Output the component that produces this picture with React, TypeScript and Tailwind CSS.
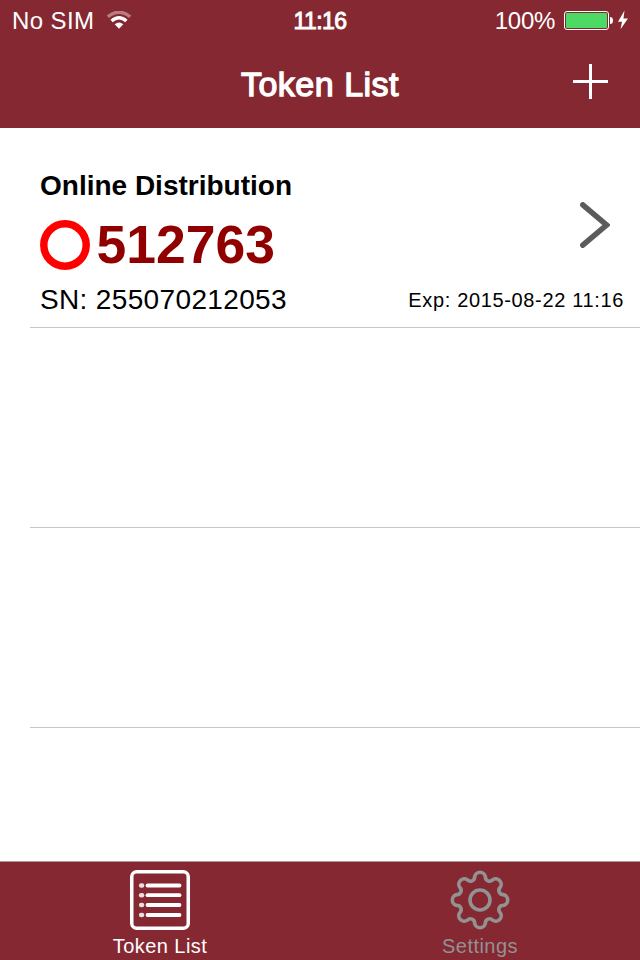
const toothAngles = [0, 45, 90, 135, 180, 225, 270, 315]

const polar = (r: number, deg: number) => {
    const a = (deg * Math.PI) / 180
    return `${(30 + r * Math.sin(a)).toFixed(2)} ${(30 - r * Math.cos(a)).toFixed(2)}`
}

// every tooth is one outward arc followed by a small inward one
const gearPath =
    `M${polar(23.8, -13)} ` +
    toothAngles.map(a => `A5.4 5.2 ${a} 0 1 ${polar(23.8, a + 13)} A4.2 4.2 0 0 0 ${polar(23.8, a + 32)}`).join(" ") +
    "Z"

const GearIcon = () => (
    <svg width="60" height="60" viewBox="0 0 60 60" fill="none" stroke="#929292" strokeWidth="3.6">
        <path d={gearPath} />
        <circle cx="30" cy="30" r="10" />
    </svg>
)

const ListIcon = () => (
    <svg width="60" height="60" viewBox="0 0 60 60" fill="none" stroke="#fff">
        <rect x="1.75" y="1.75" width="56.5" height="56.5" rx="5" strokeWidth="3.5" />
        {[15.5, 25.2, 35, 45].map(y => (
            <g key={y} strokeLinecap="round">
                <path d={`M17.5 ${y}H49.5`} strokeWidth="3.8" />
                <path d={`M11.2 ${y}H12`} strokeWidth="4.6" opacity="0.85" />
            </g>
        ))}
    </svg>
)

const StatusBar = () => (
    <div className="grid h-10 grid-cols-3 items-center pr-3 pl-3 pt-px text-[24px] leading-10">
        <div className="flex h-10 items-center gap-3">
            <span className="tracking-[0.4px]">No SIM</span>
            <svg width="26" height="20" viewBox="0 0 26 20" fill="none" stroke="#fff" strokeWidth="3.4">
                <path d="M1.8 5.8Q13 -3.4 24.2 5.8" opacity="0.4" />
                <path d="M5.6 10Q13 3.5 20.4 10" />
                <path d="M8.7 13.3Q13 9.5 17.3 13.3L13 17.7Z" fill="#fff" stroke="none" />
            </svg>
        </div>
        <div className="text-center text-[23px] tracking-[-0.6px] [-webkit-text-stroke:0.9px_#fff]">11:16</div>
        <div className="flex h-10 items-center justify-end gap-[9px]">
            <span className="tracking-[-0.3px]">100%</span>
            <svg className="-mr-px" width="65" height="20" viewBox="0 0 65 20" fill="none">
                <rect x="0.5" y="0.5" width="44" height="18" rx="2.5" stroke="#fff" strokeWidth="1" />
                <rect x="2" y="2" width="41" height="15" rx="1" fill="#4cd964" />
                <path d="M46 6Q49 6 49 9.5T46 13Z" fill="#fff" />
                <path d="M60.5 -0.5L54 10.7H58L56.5 18.3L64 7.5H59.5Z" fill="#fff" />
            </svg>
        </div>
    </div>
)

const TokenRow = () => (
    <div className="flex h-full items-start justify-between pt-[42px] pr-4 pl-2.5">
        <div>
            <div className="text-[28px] leading-8 font-bold">Online Distribution</div>
            <div className="mt-[18px] flex h-[50px] items-center gap-[6.5px]">
                <svg width="50" height="50" fill="none" stroke="#f00" strokeWidth="7.5">
                    <circle cx="25" cy="25" r="21.2" />
                </svg>
                <span className="text-[53.5px] leading-[50px] font-bold text-[#900000]">512763</span>
            </div>
            <div className="mt-[14px] text-[28px] leading-8 tracking-[0.35px]">SN: 255070212053</div>
        </div>
        <div className="flex flex-col items-end">
            <svg className="mt-8 mr-3.5" width="30" height="46" fill="none" stroke="#5b5b5b" strokeWidth="5.5">
                <path d="M2.8 2.8L26.5 23L2.8 43.2" strokeLinecap="round" />
            </svg>
            <div className="mt-10 text-[20px] leading-6 tracking-[0.65px]">Exp: 2015-08-22 11:16</div>
        </div>
    </div>
)

const tabs = [
    { label: "Token List", icon: <ListIcon />, color: "text-white" },
    { label: "Settings", icon: <GearIcon />, color: "text-[#929292]" },
]

const App = () => {
    return (
        <div className="flex h-[960px] w-[640px] flex-col overflow-hidden bg-white font-['Liberation_Sans',Arial,sans-serif] text-black">
            <header className="h-32 bg-[#852832] text-white">
                <StatusBar />
                <div className="grid h-[88px] grid-cols-[1fr_auto_1fr] items-center">
                    <div></div>
                    <h1 className="text-[34px] tracking-[0.5px] [-webkit-text-stroke:1.3px_#fff]">Token List</h1>
                    <svg className="mr-8 mb-1.5 justify-self-end" width="35" height="35" stroke="#fff" strokeWidth="3">
                        <path d="M17.5 0V35M0 17.5H35" />
                    </svg>
                </div>
            </header>

            <main className="flex-1 overflow-hidden pl-[30px]">
                <div className="h-[200px] border-b border-[#c8c7cc]"><TokenRow /></div>
                <div className="h-[200px] border-b border-[#c8c7cc]"></div>
                <div className="h-[200px] border-b border-[#c8c7cc]"></div>
            </main>

            <nav className="grid h-[99px] grid-cols-2 border-t border-[#ad9a9c] bg-[#852832]">
                {tabs.map(tab => (
                    <div key={tab.label} className={`flex flex-col items-center pt-2 ${tab.color}`}>
                        {tab.icon}
                        <span className="mt-1 text-[20px] leading-6 tracking-[0.45px]">{tab.label}</span>
                    </div>
                ))}
            </nav>
        </div>
    )
}

export default App
